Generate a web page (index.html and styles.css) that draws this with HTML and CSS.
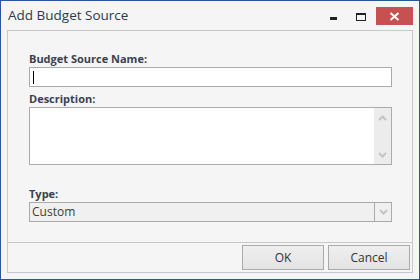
FILE: index.html
```html
<!DOCTYPE html>
<html>
<head>
  <link rel="stylesheet" href="styles.css">
</head>
<body>
  <div class="window">
    <div class="titlebar">
      <div class="title">Add Budget Source</div>
      <div class="controls">
        <span class="btn-min"></span>
        <span class="btn-max"></span>
        <span class="btn-close">
          <svg width="11" height="9" viewBox="0 0 11 9"><path d="M1.5 1 L9.5 8 M9.5 1 L1.5 8" stroke="#fff" stroke-width="2"/></svg>
        </span>
      </div>
    </div>

    <div class="panel">
      <div class="form">
        <div class="label">Budget Source Name:</div>
        <div class="field text-field"><span class="caret"></span></div>

        <div class="label desc-label">Description:</div>
        <div class="field memo">
          <div class="memo-text"></div>
          <div class="scrollbar">
            <svg width="9" height="6" viewBox="0 0 9 6"><path d="M1 5 L4.5 1.5 L8 5" fill="none" stroke="#c4c4c4" stroke-width="2"/></svg>
            <svg width="9" height="6" viewBox="0 0 9 6"><path d="M1 1 L4.5 4.5 L8 1" fill="none" stroke="#c4c4c4" stroke-width="2"/></svg>
          </div>
        </div>

        <div class="label type-label">Type:</div>
        <div class="field combo">
          <div class="combo-text">Custom</div>
          <div class="combo-btn">
            <svg width="9" height="6" viewBox="0 0 9 6"><path d="M1 1 L4.5 4.5 L8 1" fill="none" stroke="#c4c4c4" stroke-width="2"/></svg>
          </div>
        </div>
      </div>

      <div class="footer">
        <button class="dlg-btn">OK</button>
        <button class="dlg-btn">Cancel</button>
      </div>
    </div>
  </div>
</body>
</html>
```

FILE: styles.css
```css
* {
  box-sizing: border-box;
}
body {
  margin: 0;
  font-family: "Open Sans", "Liberation Sans", sans-serif;
  background-color: #f5f5f5;
}
.window {
  width: 420px;
  height: 280px;
  border: 1px solid #2b579a;
  background-color: #f5f5f5;
  display: flex;
  flex-direction: column;
}
.titlebar {
  height: 29px;
  display: flex;
  align-items: flex-start;
  justify-content: space-between;
  padding-left: 7px;
  padding-right: 6px;
}
.title {
  font-size: 13.5px;
  color: #2e3a4d;
  margin-top: 4px;
  line-height: 20px;
}
.controls {
  display: flex;
  align-items: flex-start;
  margin-top: 6px;
}
.btn-min {
  width: 7px;
  height: 3px;
  background-color: #222;
  margin-top: 10px;
  margin-right: 19px;
}
.btn-max {
  width: 10px;
  height: 8px;
  border: 1px solid #222;
  border-top-width: 2px;
  margin-top: 6px;
  margin-right: 10px;
}
.btn-close {
  width: 37px;
  height: 18px;
  background-color: #c75050;
  display: flex;
  align-items: center;
  justify-content: center;
}
.panel {
  flex: 1;
  margin: 0 6px 6px 6px;
  border: 1px solid #c8c8c8;
  display: flex;
  flex-direction: column;
}
.form {
  flex: 1;
  padding: 20px 20px 0 21px;
  border-bottom: 1px solid #c8c8c8;
}
.label {
  font-family: "Open Sans", "Liberation Sans", sans-serif;
  font-weight: bold;
  font-size: 11px;
  line-height: 16px;
  height: 16px;
  color: #3a4150;
}
.desc-label {
  margin-top: 4px;
}
.type-label {
  margin-top: 21px;
}
.field {
  border: 1px solid #ababab;
  background-color: #fff;
}
.text-field {
  height: 20px;
  padding: 2px 3px;
}
.caret {
  display: block;
  width: 1px;
  height: 13px;
  margin-top: 1px;
  background-color: #000;
}
.memo {
  height: 58px;
  display: flex;
}
.memo-text {
  flex: 1;
}
.scrollbar {
  width: 17px;
  background-color: #ececec;
  display: flex;
  flex-direction: column;
  align-items: center;
  justify-content: space-between;
  padding: 7px 0 6px 0;
}
.combo {
  height: 20px;
  display: flex;
  background-color: #f0f0f0;
}
.combo-text {
  flex: 1;
  font-size: 12px;
  line-height: 18px;
  padding-left: 2px;
  color: #3c3c3c;
}
.combo-btn {
  width: 17px;
  border-left: 1px solid #ababab;
  display: flex;
  align-items: center;
  justify-content: center;
}
.footer {
  height: 29px;
  display: flex;
  justify-content: flex-end;
  gap: 4px;
  padding: 2px 2px 0 0;
}
.dlg-btn {
  width: 82px;
  height: 25px;
  border: 1px solid #ababab;
  background: linear-gradient(#efefef, #e3e3e3);
  font-family: "Open Sans", "Liberation Sans", sans-serif;
  font-size: 12px;
  color: #333;
  padding: 0;
}
```
